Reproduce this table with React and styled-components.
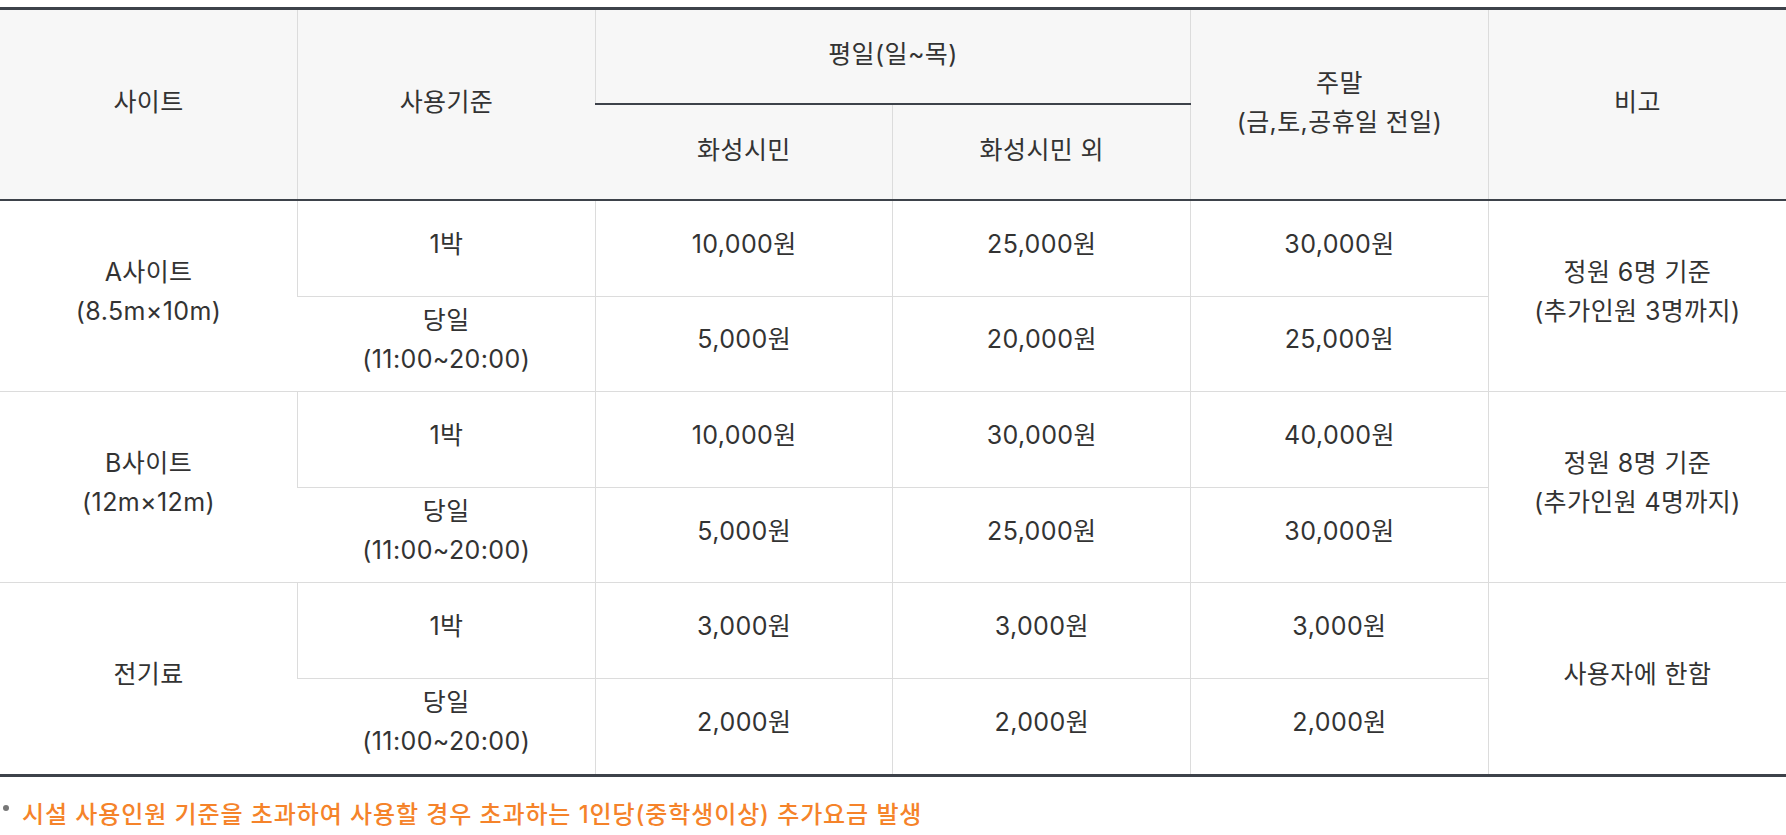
import React from 'react';
import styled, { createGlobalStyle } from 'styled-components';

const GlobalStyle = createGlobalStyle`
  html, body {
    margin: 0;
    padding: 0;
    background: #fff;
  }
  body {
    font-family: Inter, "Noto Sans CJK KR", sans-serif;
    color: #333;
  }
`;

const Wrap = styled.div`
  padding-top: 7px;
`;

const Table = styled.table`
  width: 100%;
  table-layout: fixed;
  border-collapse: collapse;
  border-top: 3px solid #3d424a;
  border-bottom: 3px solid #3d424a;
  font-size: 25px;
  letter-spacing: 0.4px;
  line-height: 1.56;
  color: #333;
`;

const Body = styled.tbody`
  border-top: 2px solid #3d424a;
`;

const Th = styled.th`
  background: #f7f7f7;
  font-weight: 400;
  height: ${p => p.h || 89}px;
  padding: 0 0 4px;
  border-left: 1px solid #dcdcdc;
  border-bottom: ${p => (p.group ? '2px solid #3d424a' : '1px solid #dcdcdc')};
  &:first-child {
    border-left: none;
  }
`;

const Td = styled.td`
  text-align: center;
  vertical-align: middle;
  height: 86.6px;
  padding: 0 0 8px;
  border-left: 1px solid #dcdcdc;
  border-bottom: 1px solid #dcdcdc;
  &:first-child {
    border-left: none;
  }
`;

const Note = styled.p`
  position: relative;
  margin: 20px 0 0;
  padding-left: 22px;
  color: #f5832a;
  font-size: 24px;
  font-weight: 500;
  letter-spacing: 0.9px;
  line-height: 1.5;
  &::before {
    content: '';
    position: absolute;
    left: 3px;
    top: 8px;
    width: 6px;
    height: 6px;
    border-radius: 50%;
    background: #777;
  }
`;

const sites = [
  {
    name: ['A사이트', '(8.5m×10m)'],
    rows: [
      ['10,000원', '25,000원', '30,000원'],
      ['5,000원', '20,000원', '25,000원'],
    ],
    note: ['정원 6명 기준', '(추가인원 3명까지)'],
  },
  {
    name: ['B사이트', '(12m×12m)'],
    rows: [
      ['10,000원', '30,000원', '40,000원'],
      ['5,000원', '25,000원', '30,000원'],
    ],
    note: ['정원 8명 기준', '(추가인원 4명까지)'],
  },
  {
    name: ['전기료'],
    rows: [
      ['3,000원', '3,000원', '3,000원'],
      ['2,000원', '2,000원', '2,000원'],
    ],
    note: ['사용자에 한함'],
  },
];

const Lines = ({ items }) =>
  items.map((t, i) => (
    <React.Fragment key={i}>
      {i > 0 && <br />}
      {t}
    </React.Fragment>
  ));

const usage = [['1박'], ['당일', '(11:00~20:00)']];

const App = () => (
  <Wrap>
    <GlobalStyle />
    <Table>
      <thead>
        <tr>
          <Th rowSpan={2}>사이트</Th>
          <Th rowSpan={2}>사용기준</Th>
          <Th colSpan={2} group>평일(일~목)</Th>
          <Th rowSpan={2}>
            주말
            <br />
            (금,토,공휴일 전일)
          </Th>
          <Th rowSpan={2}>비고</Th>
        </tr>
        <tr>
          <Th h={90}>화성시민</Th>
          <Th h={90}>화성시민 외</Th>
        </tr>
      </thead>
      <Body>
        {sites.map(site =>
          site.rows.map((prices, r) => (
            <tr key={site.name[0] + r}>
              {r === 0 && (
                <Td rowSpan={2}>
                  <Lines items={site.name} />
                </Td>
              )}
              <Td>
                <Lines items={usage[r]} />
              </Td>
              {prices.map((p, i) => (
                <Td key={i}>{p}</Td>
              ))}
              {r === 0 && (
                <Td rowSpan={2}>
                  <Lines items={site.note} />
                </Td>
              )}
            </tr>
          ))
        )}
      </Body>
    </Table>
    <Note>시설 사용인원 기준을 초과하여 사용할 경우 초과하는 1인당(중학생이상) 추가요금 발생</Note>
  </Wrap>
);

export default App;
